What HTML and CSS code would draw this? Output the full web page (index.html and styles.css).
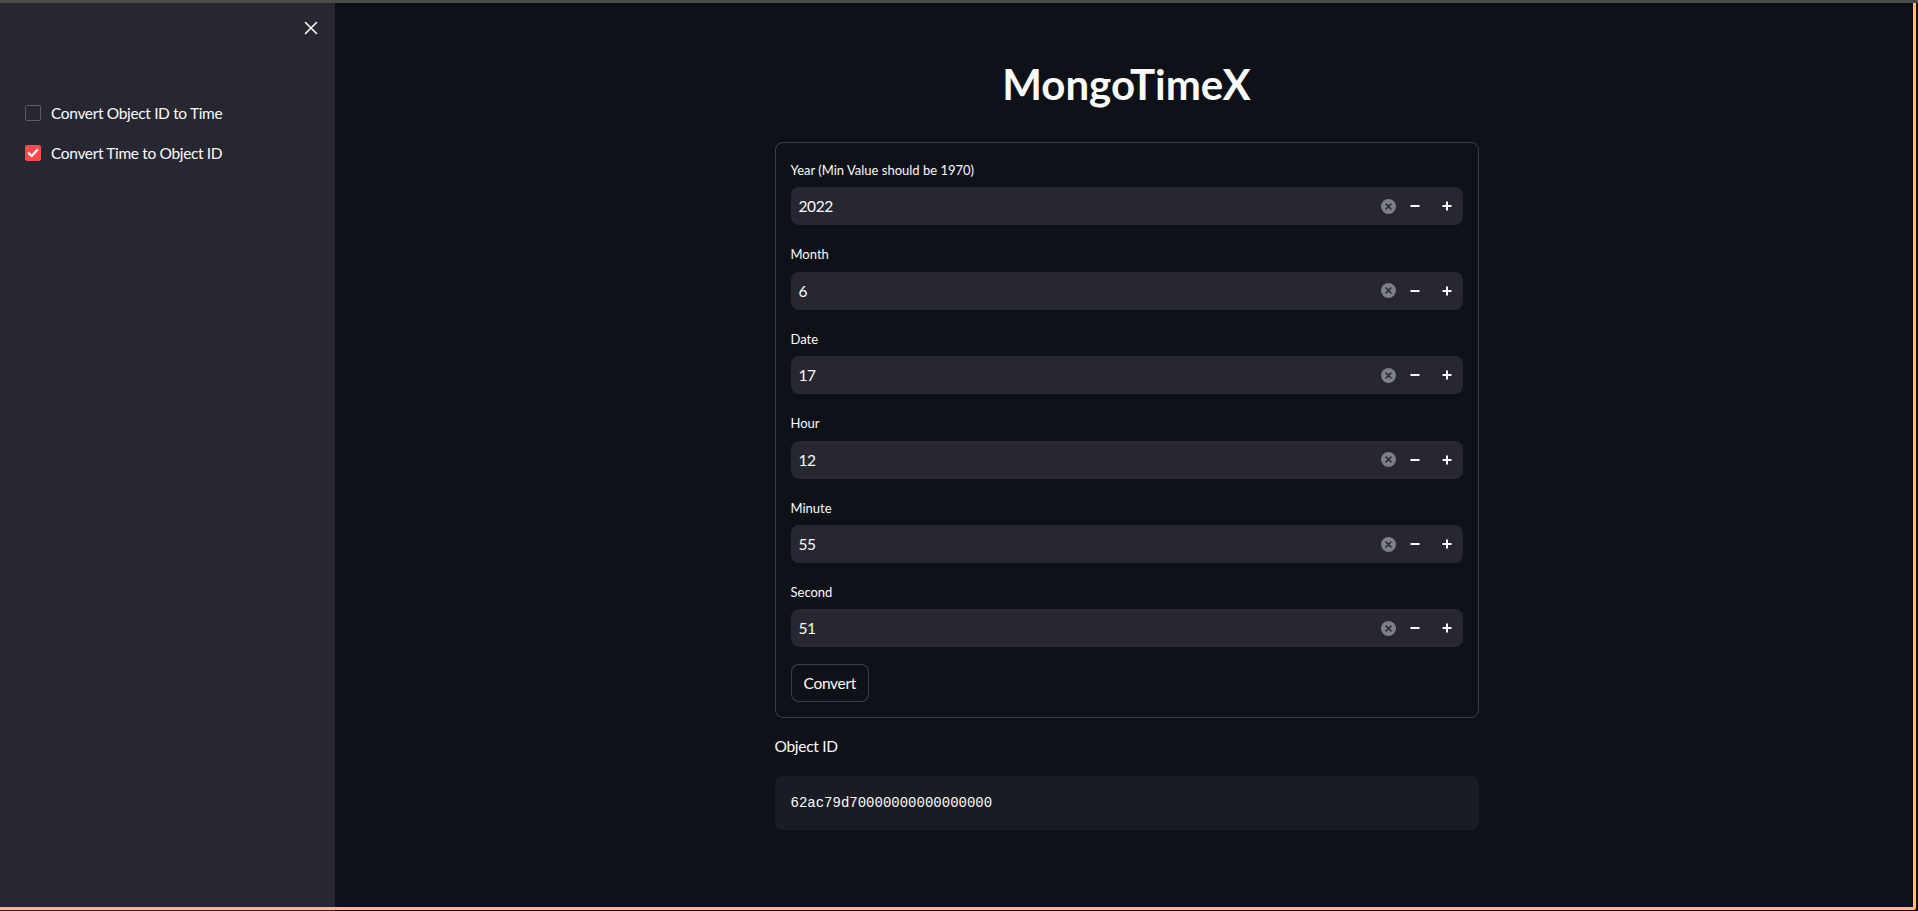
FILE: index.html
```html
<!DOCTYPE html>
<html lang="en">
<head>
<meta charset="utf-8">
<title>MongoTimeX</title>
<link rel="stylesheet" href="styles.css">
</head>
<body>
<div class="app">
  <div class="topbar"></div>
  <div class="shell">
    <aside class="sidebar">
      <div class="sidebar-head">
        <button class="close" type="button" aria-label="Close sidebar">
          <svg width="14" height="14" viewBox="0 0 14 14"><path d="M1.5 1.5 L12.5 12.5 M12.5 1.5 L1.5 12.5" stroke="#fafafa" stroke-width="1.6" stroke-linecap="round" fill="none"/></svg>
        </button>
      </div>
      <div class="checks">
        <label class="check">
          <span class="box"></span>
          <span class="check-text">Convert Object ID to Time</span>
        </label>
        <label class="check">
          <span class="box checked">
            <svg width="12" height="12" viewBox="0 0 12 12"><path d="M1.8 6.2 L4.7 9 L10.2 3" stroke="#ffffff" stroke-width="2.2" stroke-linecap="round" stroke-linejoin="round" fill="none"/></svg>
          </span>
          <span class="check-text">Convert Time to Object ID</span>
        </label>
      </div>
    </aside>
    <main class="main">
      <div class="block">
        <h1 class="title">MongoTimeX</h1>
        <div class="form">
          <div class="fields">
            <div class="field">
              <div class="label">Year (Min Value should be 1970)</div>
              <div class="input"><span class="value">2022</span><span class="clear"><svg width="15" height="15" viewBox="0 0 15 15"><circle cx="7.5" cy="7.5" r="7.5" fill="#7d7f8a"/><path d="M5 5 L10 10 M10 5 L5 10" stroke="#262730" stroke-width="1.5" stroke-linecap="round"/></svg></span><span class="step"><svg width="10" height="10" viewBox="0 0 10 10"><rect x="0.5" y="4" width="9" height="2" fill="#fafafa"/></svg></span><span class="step"><svg width="10" height="10" viewBox="0 0 10 10"><rect x="0.5" y="4" width="9" height="2" fill="#fafafa"/><rect x="4" y="0.5" width="2" height="9" fill="#fafafa"/></svg></span></div>
            </div>
            <div class="field">
              <div class="label">Month</div>
              <div class="input"><span class="value">6</span><span class="clear"><svg width="15" height="15" viewBox="0 0 15 15"><circle cx="7.5" cy="7.5" r="7.5" fill="#7d7f8a"/><path d="M5 5 L10 10 M10 5 L5 10" stroke="#262730" stroke-width="1.5" stroke-linecap="round"/></svg></span><span class="step"><svg width="10" height="10" viewBox="0 0 10 10"><rect x="0.5" y="4" width="9" height="2" fill="#fafafa"/></svg></span><span class="step"><svg width="10" height="10" viewBox="0 0 10 10"><rect x="0.5" y="4" width="9" height="2" fill="#fafafa"/><rect x="4" y="0.5" width="2" height="9" fill="#fafafa"/></svg></span></div>
            </div>
            <div class="field">
              <div class="label">Date</div>
              <div class="input"><span class="value">17</span><span class="clear"><svg width="15" height="15" viewBox="0 0 15 15"><circle cx="7.5" cy="7.5" r="7.5" fill="#7d7f8a"/><path d="M5 5 L10 10 M10 5 L5 10" stroke="#262730" stroke-width="1.5" stroke-linecap="round"/></svg></span><span class="step"><svg width="10" height="10" viewBox="0 0 10 10"><rect x="0.5" y="4" width="9" height="2" fill="#fafafa"/></svg></span><span class="step"><svg width="10" height="10" viewBox="0 0 10 10"><rect x="0.5" y="4" width="9" height="2" fill="#fafafa"/><rect x="4" y="0.5" width="2" height="9" fill="#fafafa"/></svg></span></div>
            </div>
            <div class="field">
              <div class="label">Hour</div>
              <div class="input"><span class="value">12</span><span class="clear"><svg width="15" height="15" viewBox="0 0 15 15"><circle cx="7.5" cy="7.5" r="7.5" fill="#7d7f8a"/><path d="M5 5 L10 10 M10 5 L5 10" stroke="#262730" stroke-width="1.5" stroke-linecap="round"/></svg></span><span class="step"><svg width="10" height="10" viewBox="0 0 10 10"><rect x="0.5" y="4" width="9" height="2" fill="#fafafa"/></svg></span><span class="step"><svg width="10" height="10" viewBox="0 0 10 10"><rect x="0.5" y="4" width="9" height="2" fill="#fafafa"/><rect x="4" y="0.5" width="2" height="9" fill="#fafafa"/></svg></span></div>
            </div>
            <div class="field">
              <div class="label">Minute</div>
              <div class="input"><span class="value">55</span><span class="clear"><svg width="15" height="15" viewBox="0 0 15 15"><circle cx="7.5" cy="7.5" r="7.5" fill="#7d7f8a"/><path d="M5 5 L10 10 M10 5 L5 10" stroke="#262730" stroke-width="1.5" stroke-linecap="round"/></svg></span><span class="step"><svg width="10" height="10" viewBox="0 0 10 10"><rect x="0.5" y="4" width="9" height="2" fill="#fafafa"/></svg></span><span class="step"><svg width="10" height="10" viewBox="0 0 10 10"><rect x="0.5" y="4" width="9" height="2" fill="#fafafa"/><rect x="4" y="0.5" width="2" height="9" fill="#fafafa"/></svg></span></div>
            </div>
            <div class="field">
              <div class="label">Second</div>
              <div class="input"><span class="value">51</span><span class="clear"><svg width="15" height="15" viewBox="0 0 15 15"><circle cx="7.5" cy="7.5" r="7.5" fill="#7d7f8a"/><path d="M5 5 L10 10 M10 5 L5 10" stroke="#262730" stroke-width="1.5" stroke-linecap="round"/></svg></span><span class="step"><svg width="10" height="10" viewBox="0 0 10 10"><rect x="0.5" y="4" width="9" height="2" fill="#fafafa"/></svg></span><span class="step"><svg width="10" height="10" viewBox="0 0 10 10"><rect x="0.5" y="4" width="9" height="2" fill="#fafafa"/><rect x="4" y="0.5" width="2" height="9" fill="#fafafa"/></svg></span></div>
            </div>
          </div>
          <button class="btn" type="button">Convert</button>
        </div>
        <div class="result-label">Object ID</div>
        <pre class="code">62ac79d70000000000000000</pre>
      </div>
    </main>
  </div>
  <div class="frame-edge"></div>
</div>
</body>
</html>
```
FILE: styles.css
```css
* { box-sizing: border-box; }
html, body { margin: 0; padding: 0; }
body {
  background: #0e1117;
  color: #fafafa;
  font-family: "Lato", "Noto Sans", sans-serif;
  overflow: hidden;
}
.app {
  position: relative;
  width: 1918px;
  height: 911px;
  display: flex;
  flex-direction: column;
}
.topbar {
  height: 3px;
  background: #4b4b4b;
  flex: none;
}
.shell {
  flex: 1;
  display: flex;
  min-height: 0;
}
.sidebar {
  width: 335px;
  flex: none;
  background: #262730;
  padding: 0 0 0 25px;
}
.sidebar-head {
  display: flex;
  justify-content: flex-end;
  padding: 13px 12px 0 0;
  height: 37px;
}
.close {
  width: 24px;
  height: 24px;
  padding: 0;
  border: 0;
  background: transparent;
  display: flex;
  align-items: center;
  justify-content: center;
}
.checks {
  margin-top: 61px;
  display: flex;
  flex-direction: column;
  gap: 16px;
}
.check {
  display: flex;
  align-items: center;
  height: 24px;
  gap: 10px;
  font-size: 15.5px;
  letter-spacing: -0.35px;
  color: #fafafa;
}
.box {
  width: 16px;
  height: 16px;
  border: 1px solid #5b5d66;
  border-radius: 2px;
  display: flex;
  align-items: center;
  justify-content: center;
  flex: none;
}
.box.checked {
  background: #ff4b4b;
  border-color: #ff4b4b;
}
.main {
  flex: 1;
  min-width: 0;
  display: flex;
  justify-content: center;
}
.block {
  width: 704px;
  padding-top: 55px;
}
.title {
  margin: 0;
  text-align: center;
  font-size: 42px;
  line-height: 52px;
  font-weight: 700;
  color: #fafafa;
}
.form {
  margin-top: 32px;
  border: 1px solid rgba(250, 250, 250, 0.2);
  border-radius: 8px;
  padding: 16px 15px 15px;
}
.fields {
  display: flex;
  flex-direction: column;
  gap: 18px;
}
.label {
  font-size: 13px;
  line-height: 22.4px;
  margin-bottom: 6px;
}
.input {
  height: 38px;
  background: #262730;
  border-radius: 8px;
  display: flex;
  align-items: center;
}
.value {
  flex: 1;
  padding-left: 8px;
  font-size: 15.5px;
  letter-spacing: -0.4px;
}
.clear {
  width: 15px;
  height: 15px;
  margin-right: 3px;
  display: flex;
}
.step {
  width: 32px;
  height: 38px;
  display: flex;
  align-items: center;
  justify-content: center;
}
.btn {
  margin-top: 17px;
  height: 38px;
  padding: 0 12px;
  background: #0e1117;
  color: #fafafa;
  border: 1px solid rgba(250, 250, 250, 0.2);
  border-radius: 8px;
  font-family: inherit;
  font-size: 15.5px;
  letter-spacing: -0.3px;
}
.result-label {
  margin-top: 16px;
  font-size: 15.5px;
  letter-spacing: -0.3px;
  line-height: 25.6px;
}
.code {
  margin: 16px 0 0;
  background: #1a1c24;
  border-radius: 8px;
  padding: 16px;
  font-family: "Liberation Mono", monospace;
  font-size: 14px;
  line-height: 22.4px;
  color: #fafafa;
}
.frame-edge {
  position: absolute;
  left: 0;
  top: 3px;
  width: 1916px;
  height: 907px;
  border-right: 3px solid #ffbb6e;
  border-bottom: 3px solid #ffbb6e;
  border-bottom-right-radius: 3px;
  pointer-events: none;
}
```
